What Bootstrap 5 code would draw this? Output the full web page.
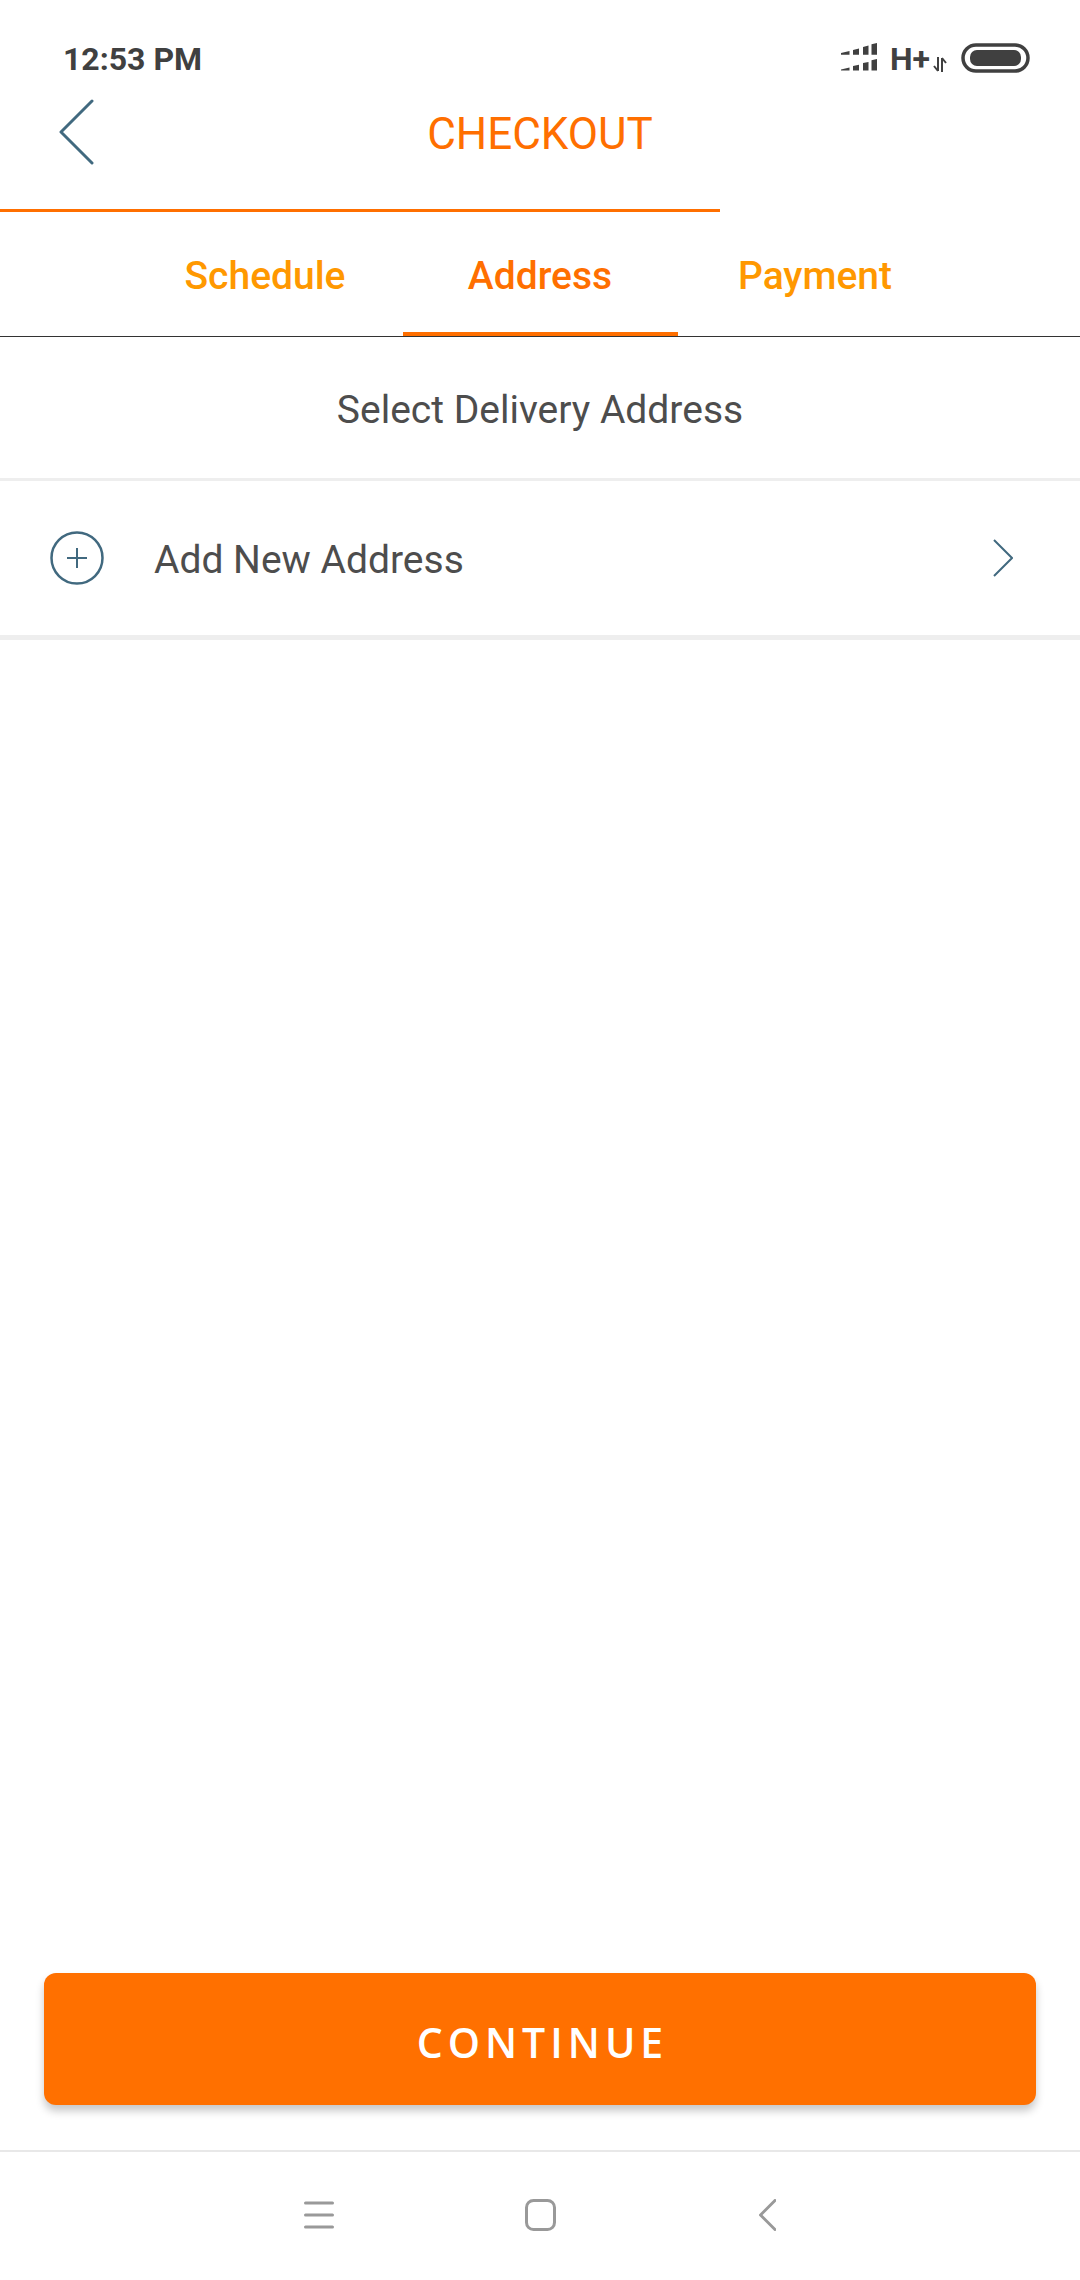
<!DOCTYPE html>
<html lang="en">
<head>
    <meta charset="UTF-8">
    <title>Checkout</title>
    <link href="https://cdn.jsdelivr.net/npm/bootstrap@5.3.1/dist/css/bootstrap.min.css" rel="stylesheet">
    <style>
        body { font-family: Roboto, sans-serif; color: #4d4d4d; background: #fff; }
        .app-screen { height: 2280px; }
        .status-strip { height: 76px; padding: 41px 50px 0 63px; font-size: 32px; font-weight: 700; line-height: 36px; color: #404040; }
        .signal-icon, .battery-icon { margin-top: 2px; }
        .net-type { margin-left: 12px; }
        .net-arrows { margin: 16px 14px 0 3px; }
        .checkout-head { height: 133px; padding: 0 0 18px 0; display: grid; grid-template-columns: 1fr auto 1fr; align-items: center; }
        .back-icon { margin: 0 0 3px 59px; }
        .checkout-title { font-size: 44px; font-weight: 400; color: #ff6f00; line-height: 1; }
        .head-progress { height: 3px; background: transparent; border-radius: 0; }
        .head-progress .progress-bar { background: #ff6f00; }
        .step-tabs { border-bottom: 1px solid #333; height: 125px; }
        .step-tabs .nav-link { width: 275px; height: 124px; padding: 4px 0 0; display: flex; align-items: center; justify-content: center; font-size: 39px; font-weight: 500; color: #ff9800; border-bottom: 4px solid transparent; border-top: 4px solid transparent; }
        .step-tabs .nav-link.active { color: #ff6f00; border-bottom-color: #ff6f00; }
        .select-title { height: 141px; font-size: 39px; line-height: 146px; text-align: center; color: #4d4d4d; margin: 0; font-weight: 400; }
        .list-group .add-row.list-group-item { height: 162px; padding: 4px 67px 0 50px; font-size: 39px; color: #4d4d4d; border-width: 3px 0 5px; border-style: solid; border-color: #eee; border-radius: 0; }
        .add-label { margin-left: 50px; }
        .add-icon, .next-icon { margin-top: -4px; }
        .continue-btn.btn { margin: 0 44px; height: 132px; padding: 7px 0 0 5px; border: 0; border-radius: 12px; background: #ff7000; color: #fff; font-family: "Open Sans", sans-serif; font-size: 41px; font-weight: 600; letter-spacing: 5px; box-shadow: 0 6px 8px rgba(0,0,0,.22); }
        .bottom-keys { margin-top: 45px; height: 130px; border-top: 2px solid #e8e8e8; padding-bottom: 2px; }
        .home-key { margin: 0 203px 0 191px; }
    </style>
</head>
<body>
<div class="app-screen d-flex flex-column">
    <div class="status-strip d-flex justify-content-between align-items-start">
        <span>12:53 PM</span>
        <div class="d-flex align-items-start">
            <!-- signal, two rows of bars -->
            <svg class="signal-icon" width="37" height="28" viewBox="0 0 37 28" fill="#404040">
                <path d="M0 10 L8.5 8 V11.7 H0Z M12 7 L18 5.5 V11.7 H12Z M22 4 L27.5 2.5 V11.7 H22Z M30.5 1.2 L36 0 V11.7 H30.5Z"/>
                <path d="M0 26.5 L8.5 24.4 V27.4 H0Z M12 23 L18 21.7 V27.4 H12Z M22 20 L27.5 19 V27.4 H22Z M30.5 17.2 L36 16 V27.4 H30.5Z"/>
            </svg>
            <span class="net-type">H+</span>
            <svg class="net-arrows" width="14" height="15" viewBox="0 0 14 15" fill="none" stroke="#404040" stroke-width="2">
                <path d="M5 0 V14 M1 9 L5 14 M9 15 V1 M9 1 L13 6"/>
            </svg>
            <svg class="battery-icon" width="69" height="30" viewBox="0 0 69 30">
                <rect x="2" y="2" width="65" height="26" rx="13" fill="none" stroke="#404040" stroke-width="3.5"/>
                <rect x="9" y="7" width="51" height="16" rx="7" fill="#404040"/>
            </svg>
        </div>
    </div>

    <div class="checkout-head">
        <svg class="back-icon" width="36" height="66" viewBox="0 0 36 66" fill="none" stroke="#41697f" stroke-width="3" stroke-linecap="round" stroke-linejoin="round">
            <path d="M33 2 L2 33 L33 64"/>
        </svg>
        <span class="checkout-title">CHECKOUT</span>
    </div>

    <div class="progress head-progress">
        <div class="progress-bar" style="width: 66.67%"></div>
    </div>

    <nav class="nav step-tabs justify-content-center">
        <a class="nav-link" href="#">Schedule</a>
        <a class="nav-link active" href="#">Address</a>
        <a class="nav-link" href="#">Payment</a>
    </nav>

    <h2 class="select-title">Select Delivery Address</h2>

    <div class="list-group list-group-flush">
        <a class="add-row list-group-item d-flex align-items-center" href="#">
            <svg class="add-icon" width="54" height="54" viewBox="0 0 54 54" fill="none" stroke="#41697f" stroke-width="2.5">
                <circle cx="27" cy="27" r="25.5"/>
                <path d="M27 17 V37 M17 27 H37" stroke-width="2"/>
            </svg>
            <span class="add-label flex-grow-1">Add New Address</span>
            <svg class="next-icon" width="20" height="38" viewBox="0 0 20 38" fill="none" stroke="#41697f" stroke-width="2">
                <path d="M1 1 L19 19 L1 37"/>
            </svg>
        </a>
    </div>

    <div class="flex-grow-1"></div>

    <button class="continue-btn btn" type="button">CONTINUE</button>

    <div class="bottom-keys d-flex justify-content-center align-items-center">
        <svg width="30" height="28" viewBox="0 0 30 28" stroke="#999" stroke-width="3" stroke-linecap="round">
            <path d="M1.5 2 H28.5 M1.5 14 H28.5 M1.5 26 H28.5"/>
        </svg>
        <svg class="home-key" width="31" height="32" viewBox="0 0 31 32" fill="none" stroke="#999" stroke-width="3">
            <rect x="1.5" y="1.5" width="28" height="29" rx="7"/>
        </svg>
        <svg width="17" height="32" viewBox="0 0 17 32" fill="none" stroke="#999" stroke-width="3" stroke-linecap="round">
            <path d="M16 1.5 L1.5 16 L16 30.5"/>
        </svg>
    </div>
</div>
<script src="https://cdn.jsdelivr.net/npm/bootstrap@5.3.1/dist/js/bootstrap.bundle.min.js"></script>
</body>
</html>
